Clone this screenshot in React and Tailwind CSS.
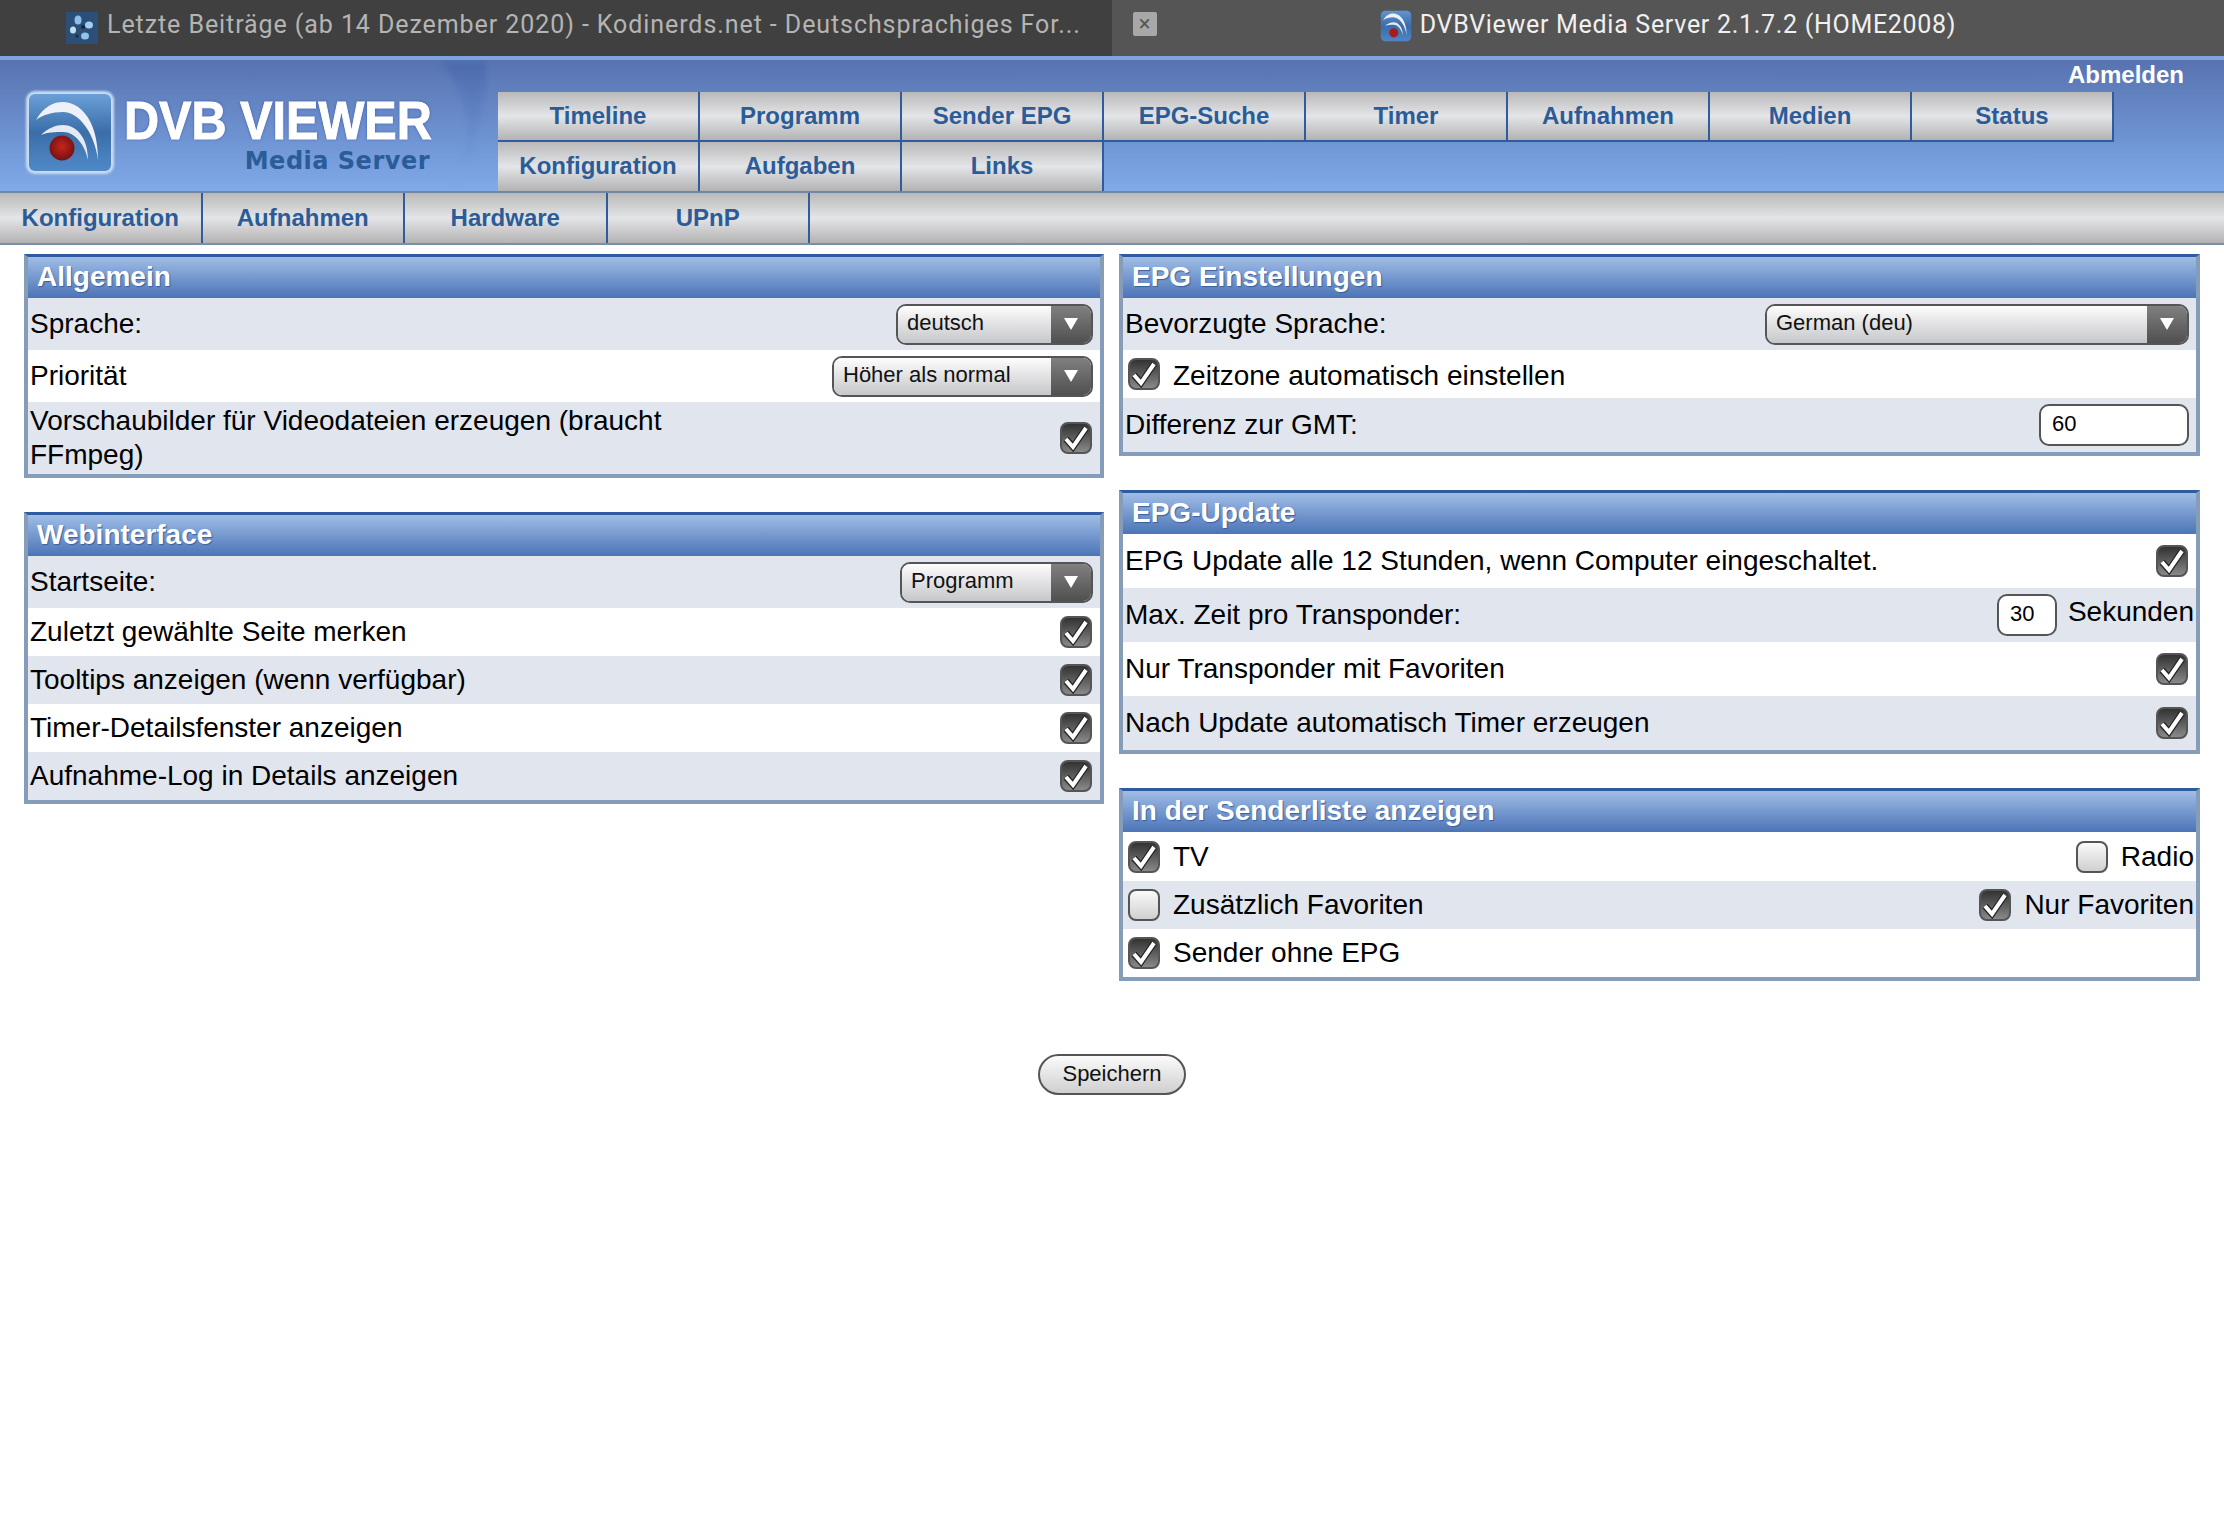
import React from 'react';

const font = 'font-["Liberation_Sans",Arial,sans-serif]';

function Arcs() {
  return (
    <>
      <path d="M8 27C16 13 26 9 35 9C50 9 70 24 70 67C67 42 52 19 35 19C24 19 14 22 8 27Z" fill="#eef2f8" />
      <path d="M13 42C20 35 28 32 35 32C48 32 60 44 60 67C57 52 47 39 35 39C27 39 20 39 13 42Z" fill="#e4eaf3" />
    </>
  );
}

function TabIcon() {
  return (
    <svg width="32" height="32" viewBox="0 0 84 84">
      <defs>
        <linearGradient id="tabg" x1="0" y1="0" x2="0" y2="1">
          <stop offset="0" stopColor="#5f96d2" />
          <stop offset="0.5" stopColor="#3a6ca8" />
          <stop offset="1" stopColor="#4f86c6" />
        </linearGradient>
      </defs>
      <rect x="2" y="2" width="80" height="80" rx="12" fill="url(#tabg)" />
      <Arcs />
      <circle cx="36" cy="60" r="12" fill="#a81c1c" />
    </svg>
  );
}

function BlueIcon() {
  return (
    <svg width="32" height="32" viewBox="0 0 32 32">
      <defs>
        <filter id="soft">
          <feGaussianBlur stdDeviation="0.7" />
        </filter>
      </defs>
      <rect width="32" height="32" fill="#2c4f78" />
      <g filter="url(#soft)">
        <ellipse cx="12" cy="8" rx="3.5" ry="4.5" fill="#8ebee8" />
        <ellipse cx="23" cy="13" rx="4" ry="3.5" fill="#a0cef0" />
        <ellipse cx="7" cy="18" rx="3" ry="3.5" fill="#c4dcf0" />
        <ellipse cx="19" cy="24" rx="4" ry="3.5" fill="#8ec4ea" />
        <circle cx="11" cy="24" r="1.5" fill="#16283c" />
        <circle cx="17" cy="15" r="2" fill="#16283c" />
      </g>
    </svg>
  );
}

function Logo() {
  return (
    <svg width="96" height="91" viewBox="-6 -6 96 91" className="absolute left-[22px] top-[27px]">
      <defs>
        <linearGradient id="lg" x1="0" y1="0" x2="0" y2="1">
          <stop offset="0" stopColor="#6a9fd8" />
          <stop offset="0.5" stopColor="#3b6ea8" />
          <stop offset="1" stopColor="#5089c8" />
        </linearGradient>
        <radialGradient id="red" cx="0.5" cy="0.45" r="0.6">
          <stop offset="0" stopColor="#c8241c" />
          <stop offset="1" stopColor="#6a1010" />
        </radialGradient>
        <filter id="glow">
          <feGaussianBlur stdDeviation="1" />
        </filter>
      </defs>
      <rect x="-2" y="-2" width="88" height="83" rx="9" fill="#c9dcf2" filter="url(#glow)" />
      <rect x="1" y="1" width="82" height="77" rx="6" fill="url(#lg)" />
      <Arcs />
      <circle cx="34" cy="55" r="12.5" fill="url(#red)" />
    </svg>
  );
}

function Check({ on = true }) {
  return (
    <span
      className={
        'inline-flex items-center justify-center w-[32px] h-[32px] shrink-0 rounded-[8px] border-2 border-[#555] ' +
        (on ? 'bg-gradient-to-b from-[#333333] to-[#8a8a8a]' : 'bg-gradient-to-b from-[#fafafa] to-[#d0d0d0]')
      }
    >
      {on && (
        <svg width="28" height="28" viewBox="0 0 28 28">
          <path d="M4 15l7 8L24 4" fill="none" stroke="#222" strokeWidth="6.5" />
          <path d="M4 15l7 8L24 4" fill="none" stroke="#fff" strokeWidth="4" />
        </svg>
      )}
    </span>
  );
}

function Select({ label, width }) {
  return (
    <div className={'flex h-[41px] -mr-[1px] rounded-[10px] border-2 border-[#555] overflow-hidden ' + width}>
      <div className="flex-1 flex items-center pl-[9px] text-[22px] text-[#111] bg-gradient-to-b from-[#fdfdfd] to-[#c6c7ca] pb-[3px]">
        {label}
      </div>
      <div className="w-[40px] flex items-center justify-center bg-gradient-to-b from-[#808080] to-[#505050]">
        <span className="w-0 h-0 border-l-[7px] border-r-[7px] border-t-[12px] border-l-transparent border-r-transparent border-t-white" />
      </div>
    </div>
  );
}

function Panel({ title, children }) {
  return (
    <section className="border-x-4 border-b-4 border-[#859db9]">
      <h2 className="h-[44px] -mx-[4px] border-t-[3px] border-t-[#2f5c9e] border-x-4 border-x-[#859db9] flex items-center text-[28px] font-bold text-white bg-gradient-to-b from-[#a0bde6] to-[#4c74b6] [text-shadow:1px_1px_1px_#3b5f9a]">
        <span className="pl-[9px] -mt-[1px]">{title}</span>
      </h2>
      {children}
    </section>
  );
}

function Row({ h, alt, pad = 'pl-[2px] pr-[8px]', children, className = '' }) {
  return (
    <div className={'flex items-center justify-between text-[28px] text-black ' + h + ' ' + pad + ' ' + (alt ? 'bg-[#e1e5ee] ' : 'bg-white ') + className}>
      {children}
    </div>
  );
}

const nav1 = ['Timeline', 'Programm', 'Sender EPG', 'EPG-Suche', 'Timer', 'Aufnahmen', 'Medien', 'Status'];
const nav2 = ['Konfiguration', 'Aufgaben', 'Links'];
const sub = ['Konfiguration', 'Aufnahmen', 'Hardware', 'UPnP'];
const metal = 'bg-gradient-to-b from-[#b9b9b9] via-[#e4e5e8] to-[#b3b3b3]';

function NavTab({ label, h }) {
  return (
    <div className={'w-[202px] flex items-center justify-center border-r-2 border-[#2f5c9e] text-[24px] font-bold text-[#2b5c98] ' + h + ' ' + metal}>
      {label}
    </div>
  );
}

export default function App() {
  return (
    <div className={'min-h-[1517px] bg-white ' + font}>
      {/* browser tab strip */}
      <div className="flex h-[56px] font-['Roboto',sans-serif] text-[25px]">
        <div className="w-[1112px] bg-[#404040] flex items-center pl-[66px] gap-[9px] text-[#b4b4b4] tracking-[0.92px]">
          <BlueIcon />
          <span className="-mt-[6px]">Letzte Beiträge (ab 14 Dezember 2020) - Kodinerds.net - Deutschsprachiges For...</span>
        </div>
        <div className="relative flex-1 bg-[#555555] flex items-center justify-center text-[#f0f0f0] tracking-[0.7px]">
          <span className="absolute left-[21px] top-[12px] w-[24px] h-[24px] rounded-[2px] bg-[#a8a8a8] flex items-center justify-center text-[#555] text-[22px] leading-none">×</span>
          <div className="flex items-center gap-[8px] -mt-[4px]">
            <TabIcon />
            <span className="-mt-[2px]">DVBViewer Media Server 2.1.7.2 (HOME2008)</span>
          </div>
        </div>
      </div>

      {/* header */}
      <header className="relative h-[137px] border-t-[4px] border-t-[#7fa3dc] border-b-[2px] border-b-[#6f86a6] bg-gradient-to-b from-[#5773b0] to-[#80aaea] flex">
        <svg className="absolute left-0 top-0" width="490" height="131" viewBox="0 0 490 131">
          <defs>
            <linearGradient id="cres" x1="0" y1="0" x2="0" y2="1">
              <stop offset="0" stopColor="#3f5fa8" stopOpacity="0.5" />
              <stop offset="0.7" stopColor="#5c86cc" stopOpacity="0.2" />
              <stop offset="1" stopColor="#7aa6e6" stopOpacity="0" />
            </linearGradient>
            <filter id="soften" x="-20%" width="130%">
              <feGaussianBlur stdDeviation="3" />
            </filter>
          </defs>
          <path d="M440 2H487C486 50 474 100 450 131C472 90 476 40 440 2Z" fill="url(#cres)" filter="url(#soften)" />
        </svg>
        <div className="relative w-[498px] shrink-0">
          <Logo />
          <div className="absolute left-[124px] top-[33px] text-[54px] leading-none font-bold text-white [-webkit-text-stroke:1px_white] [text-shadow:0_0_3px_#2b3f9a] whitespace-nowrap [transform:scaleX(0.9)] origin-left">
            DVB VIEWER
          </div>
          <div className="absolute right-[68px] top-[89px] font-['DejaVu_Sans',sans-serif] text-[24px] tracking-[0.5px] leading-none font-bold text-[#2a5c98]">
            Media Server
          </div>
        </div>
        <nav className="mt-[32px]">
          <div className="flex">
            {nav1.map((t) => (
              <NavTab key={t} label={t} h="h-[50px] border-b-2" />
            ))}
          </div>
          <div className="flex">
            {nav2.map((t) => (
              <NavTab key={t} label={t} h="h-[49px] pb-[1px]" />
            ))}
          </div>
        </nav>
        <a className="absolute right-[40px] top-[-3px] text-[24px] font-bold text-white">Abmelden</a>
      </header>

      {/* sub navigation */}
      <div className={'flex h-[52px] border-b-[2px] border-b-[#7a8ea8] ' + metal}>
        {sub.map((t) => (
          <div key={t} className="w-[202.5px] flex items-center justify-center border-r-2 border-[#2f5c9e] text-[24px] font-bold text-[#2b5c98]">
            {t}
          </div>
        ))}
      </div>

      {/* settings */}
      <div className="grid grid-cols-[1080px_1081px] gap-x-[15px] px-[24px] pt-[9px]">
        <div className="flex flex-col gap-[34px]">
          <Panel title="Allgemein">
            <Row h="h-[52px]" alt>
              <span>Sprache:</span>
              <Select label="deutsch" width="w-[197px]" />
            </Row>
            <Row h="h-[52px]">
              <span>Priorität</span>
              <Select label="Höher als normal" width="w-[261px]" />
            </Row>
            <Row h="h-[72px]" alt>
              <span className="w-[660px] leading-[34px]">Vorschaubilder für Videodateien erzeugen (braucht FFmpeg)</span>
              <Check />
            </Row>
          </Panel>
          <Panel title="Webinterface">
            <Row h="h-[52px]" alt>
              <span>Startseite:</span>
              <Select label="Programm" width="w-[193px]" />
            </Row>
            <Row h="h-[48px]">
              <span>Zuletzt gewählte Seite merken</span>
              <Check />
            </Row>
            <Row h="h-[48px]" alt>
              <span>Tooltips anzeigen (wenn verfügbar)</span>
              <Check />
            </Row>
            <Row h="h-[48px]">
              <span>Timer-Detailsfenster anzeigen</span>
              <Check />
            </Row>
            <Row h="h-[48px]" alt>
              <span>Aufnahme-Log in Details anzeigen</span>
              <Check />
            </Row>
          </Panel>
        </div>

        <div className="flex flex-col gap-[34px]">
          <Panel title="EPG Einstellungen">
            <Row h="h-[52px]" alt>
              <span>Bevorzugte Sprache:</span>
              <Select label="German (deu)" width="w-[424px]" />
            </Row>
            <Row h="h-[48px]" pad="pl-[5px] pr-[8px]" className="justify-start gap-[13px]">
              <Check />
              <span className="pt-[3px]">Zeitzone automatisch einstellen</span>
            </Row>
            <Row h="h-[54px]" alt pad="pl-[2px] pr-[7px]">
              <span>Differenz zur GMT:</span>
              <div className="w-[150px] h-[42px] rounded-[10px] border-2 border-[#555] bg-white flex items-center pl-[11px] pb-[4px] text-[22px]">60</div>
            </Row>
          </Panel>
          <Panel title="EPG-Update">
            <Row h="h-[54px]">
              <span>EPG Update alle 12 Stunden, wenn Computer eingeschaltet.</span>
              <Check />
            </Row>
            <Row h="h-[54px]" alt pad="pl-[2px] pr-[2px]">
              <span>Max. Zeit pro Transponder:</span>
              <div className="flex items-center gap-[11px]">
                <div className="w-[60px] h-[42px] rounded-[10px] border-2 border-[#555] bg-white flex items-center pl-[11px] pb-[4px] text-[22px]">30</div>
                <span className="-mt-[6px]">Sekunden</span>
              </div>
            </Row>
            <Row h="h-[54px]">
              <span>Nur Transponder mit Favoriten</span>
              <Check />
            </Row>
            <Row h="h-[54px]" alt>
              <span>Nach Update automatisch Timer erzeugen</span>
              <Check />
            </Row>
          </Panel>
          <Panel title="In der Senderliste anzeigen">
            <Row h="h-[49px]" pad="pl-[5px] pr-[2px]">
              <div className="flex items-center gap-[13px]">
                <Check />
                <span>TV</span>
              </div>
              <div className="flex items-center gap-[13px]">
                <Check on={false} />
                <span>Radio</span>
              </div>
            </Row>
            <Row h="h-[48px]" alt pad="pl-[5px] pr-[2px]">
              <div className="flex items-center gap-[13px]">
                <Check on={false} />
                <span>Zusätzlich Favoriten</span>
              </div>
              <div className="flex items-center gap-[13px]">
                <Check />
                <span>Nur Favoriten</span>
              </div>
            </Row>
            <Row h="h-[48px]" pad="pl-[5px] pr-[8px]" className="justify-start gap-[13px]">
              <Check />
              <span>Sender ohne EPG</span>
            </Row>
          </Panel>
        </div>
      </div>

      <div className="flex justify-center mt-[73px]">
        <button className="w-[148px] h-[41px] rounded-full border-2 border-[#555] bg-gradient-to-b from-[#fbfbfb] to-[#cfcfcf] text-[22px] text-[#111] pb-[2px]">
          Speichern
        </button>
      </div>
    </div>
  );
}
